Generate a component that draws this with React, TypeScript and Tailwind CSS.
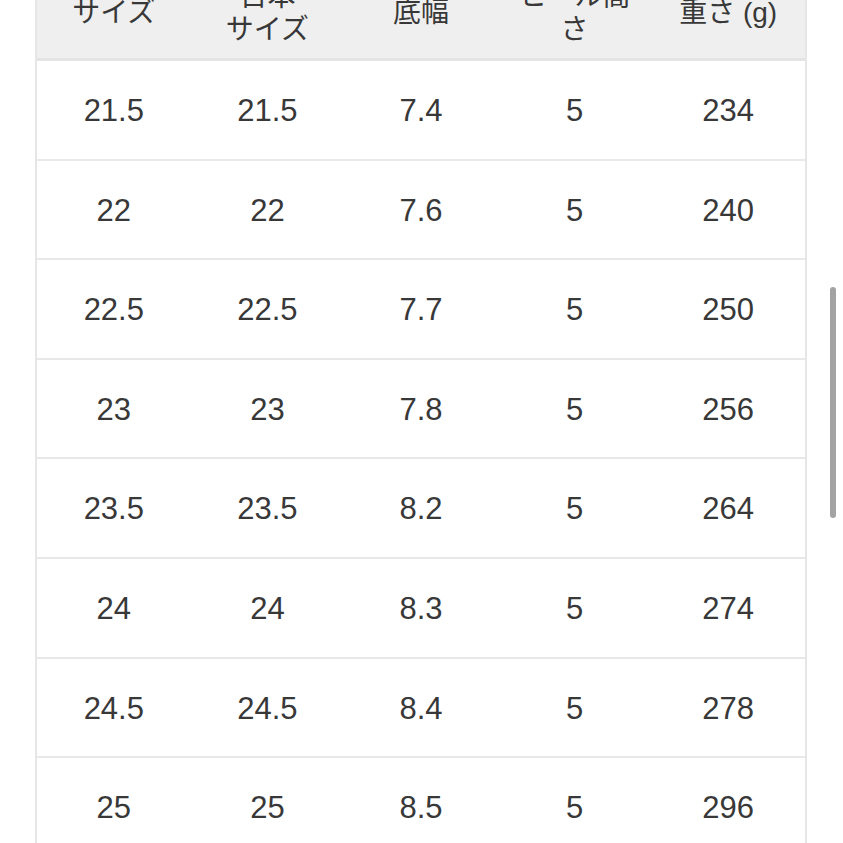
import React from "react";

const headers: string[][] = [
  ["サイズ"],
  ["日本", "サイズ"],
  ["底幅"],
  ["ヒール高", "さ"],
  ["重さ (g)"],
];

const rows: string[][] = [
  ["21.5", "21.5", "7.4", "5", "234"],
  ["22", "22", "7.6", "5", "240"],
  ["22.5", "22.5", "7.7", "5", "250"],
  ["23", "23", "7.8", "5", "256"],
  ["23.5", "23.5", "8.2", "5", "264"],
  ["24", "24", "8.3", "5", "274"],
  ["24.5", "24.5", "8.4", "5", "278"],
  ["25", "25", "8.5", "5", "296"],
  ["25.5", "25.5", "8.6", "5", "302"],
];

export default function App() {
  return (
    <div
      className="relative h-[843px] overflow-hidden bg-white text-[#383838]"
      style={{ fontFamily: '"Liberation Sans", "Noto Sans CJK JP", sans-serif' }}
    >
      <div className="-mt-[35px] ml-[35px] w-[772px] border-x-2 border-[#e6e6e6]">
        {/* Header */}
        <div className="grid h-[96px] grid-cols-5 border-b-[3px] border-[#e4e4e4] bg-[#efefef]">
          {headers.map((lines, i) => (
            <div key={i} className="flex flex-col items-center justify-center pt-[2px] text-[28px] leading-[33px]">
              {lines.map((l) => (
                <span key={l}>{l}</span>
              ))}
            </div>
          ))}
        </div>

        {/* Rows */}
        {rows.map((r, i) => (
          <div key={i} className="grid h-[99.6px] grid-cols-5 border-b-2 border-[#e8e8e8]">
            {r.map((c, j) => (
              <div key={j} className="flex items-center justify-center pt-[3px] text-[31px]">
                {c}
              </div>
            ))}
          </div>
        ))}
      </div>

      {/* Scrollbar */}
      <div className="absolute left-[830px] top-[287px] h-[231px] w-[6px] rounded-full bg-[#a3a3a3]" />
    </div>
  );
}
